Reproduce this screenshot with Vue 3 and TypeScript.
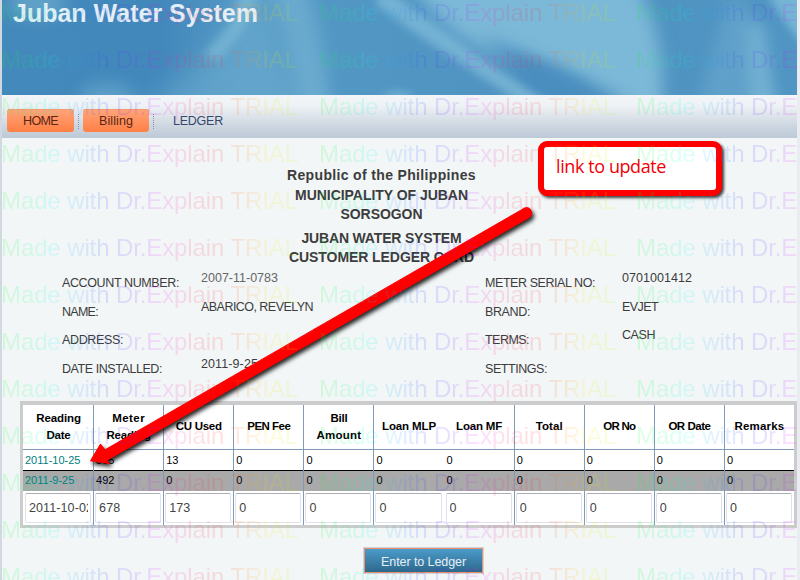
<script setup lang="ts">
interface Label { text: string; w: number }
interface Row { label: Label; value: Label; muted?: boolean }

const marks = Array.from({ length: 13 }, (_, r) =>
  [2, 320, 637].map((x) => ({ x: x - 1, y: 21 + r * 47 })),
).flat()

// Spreads letters so that a text run takes the given width.
const vFit = {
  mounted(el: HTMLElement, binding: { value: number }) {
    const natural = el.getBoundingClientRect().width
    const count = (el.textContent ?? '').trim().length
    if (count > 1) el.style.letterSpacing = `${(binding.value - natural) / count}px`
  },
}

const headings: Label[] = [
  { text: 'Republic of the Philippines', w: 189 },
  { text: 'MUNICIPALITY OF JUBAN', w: 173 },
  { text: 'SORSOGON', w: 82 },
  { text: 'JUBAN WATER SYSTEM', w: 160 },
  { text: 'CUSTOMER LEDGER CARD', w: 185 },
]
const left: Row[] = [
  { label: { text: 'ACCOUNT NUMBER:', w: 117 }, value: { text: '2007-11-0783', w: 77 }, muted: true },
  { label: { text: 'NAME:', w: 36 }, value: { text: 'ABARICO, REVELYN', w: 112 } },
  { label: { text: 'ADDRESS:', w: 61 }, value: { text: '', w: 0 } },
  { label: { text: 'DATE INSTALLED:', w: 100 }, value: { text: '2011-9-25', w: 57 } },
]
const right: Row[] = [
  { label: { text: 'METER SERIAL NO:', w: 110 }, value: { text: '0701001412', w: 70 } },
  { label: { text: 'BRAND:', w: 45 }, value: { text: 'EVJET', w: 36 } },
  { label: { text: 'TERMS:', w: 44 }, value: { text: 'CASH', w: 33 } },
  { label: { text: 'SETTINGS:', w: 62 }, value: { text: '', w: 0 } },
]
const columns: Label[][] = [
  [{ text: 'Reading', w: 44.5 }, { text: 'Date', w: 24 }],
  [{ text: 'Meter', w: 33 }, { text: 'Reading', w: 44.5 }],
  [{ text: 'CU Used', w: 46 }],
  [{ text: 'PEN Fee', w: 43 }],
  [{ text: 'Bill', w: 17 }, { text: 'Amount', w: 45 }],
  [{ text: 'Loan MLP', w: 54 }],
  [{ text: 'Loan MF', w: 46 }],
  [{ text: 'Total', w: 27 }],
  [{ text: 'OR No', w: 32 }],
  [{ text: 'OR Date', w: 42 }],
  [{ text: 'Remarks', w: 50 }],
]
const zeros = (n: number) => Array.from({ length: n }, () => '0')
const first = ['2011-10-25', '505', '13', ...zeros(8)]
const second = ['2011-9-25', '492', ...zeros(9)]
const entry = ['2011-10-02', '678', '173', ...zeros(8)]
</script>

<template>
  <div class="page">
    <header class="banner">
      <svg class="art" viewBox="0 0 795 95" preserveAspectRatio="none">
        <defs>
          <linearGradient id="base" x1="0" x2="1">
            <stop offset="0" stop-color="#4489bb" /><stop offset=".2" stop-color="#4288bb" />
            <stop offset=".3" stop-color="#5499c5" /><stop offset=".45" stop-color="#5297c4" />
            <stop offset=".7" stop-color="#4f92c1" /><stop offset="1" stop-color="#5095c3" />
          </linearGradient>
          <filter id="b6" filterUnits="userSpaceOnUse" x="-60" y="-80" width="920" height="260"><feGaussianBlur stdDeviation="8" /></filter>
          <filter id="b3" filterUnits="userSpaceOnUse" x="-60" y="-80" width="920" height="260"><feGaussianBlur stdDeviation="4.5" /></filter>
          <filter id="b14" filterUnits="userSpaceOnUse" x="-60" y="-80" width="920" height="260"><feGaussianBlur stdDeviation="14" /></filter>
        </defs>
        <rect width="795" height="95" fill="url(#base)" />
        <ellipse cx="35" cy="4" rx="30" ry="14" fill="#7bb8d6" opacity=".55" filter="url(#b6)" />
        <ellipse cx="105" cy="97" rx="28" ry="14" fill="#77b5d5" opacity=".5" filter="url(#b6)" />
        <path d="M240 0L225 40L190 70L130 120H320L290 60L270 20L290 -20Z" fill="#6caccf" opacity=".6" filter="url(#b14)" />
        <path d="M240 -15L228 25L200 56L218 60L240 32L262 -15Z" fill="#83bfd9" opacity=".6" filter="url(#b3)" />
        <path d="M272 -15C280 30 290 60 306 120H330C324 60 316 25 304 -15Z" fill="#79b6d5" opacity=".6" filter="url(#b6)" />
        <path d="M405 -30H628C655 20 666 60 658 125H652C600 80 560 68 510 60C460 45 435 20 405 -20Z" fill="#7cb8d7" filter="url(#b6)" />
        <path d="M478 36C510 50 560 60 615 115H540C520 75 500 55 478 36Z" fill="#488dbf" filter="url(#b6)" />
        <path d="M375 -18C430 22 480 60 560 112H532C480 76 420 40 375 5Z" fill="#80bcd9" opacity=".75" filter="url(#b3)" />
        <path d="M726 0L742 0L775 125H690Z" fill="#6aa9cf" opacity=".6" filter="url(#b6)" />
        <path d="M744 20L762 25L775 120H752Z" fill="#7ebad8" opacity=".75" filter="url(#b6)" />
        <path d="M760 -20H820V60Q780 30 760 -20Z" fill="#79b8d7" opacity=".9" filter="url(#b3)" />
        <ellipse cx="396" cy="97" rx="14" ry="6" fill="#7bb8d6" opacity=".7" filter="url(#b3)" />
      </svg>
      <h1><span v-fit="245">Juban Water System</span></h1>
    </header>

    <nav class="menu">
      <a class="tab home"><span v-fit="35">HOME</span></a>
      <i class="dots"></i>
      <a class="tab"><span v-fit="34">Billing</span></a>
      <i class="dots"></i>
      <a class="plain"><span v-fit="50">LEDGER</span></a>
    </nav>

    <main>
      <div class="heads">
        <p v-for="h in headings" :key="h.text"><span v-fit="h.w">{{ h.text }}</span></p>
      </div>

      <div class="info">
        <dl v-for="(group, g) in [left, right]" :key="g" :class="{ second: g === 1 }">
          <div v-for="r in group" :key="r.label.text" class="pair">
            <dt><span v-fit="r.label.w">{{ r.label.text }}</span></dt>
            <dd :class="{ muted: r.muted }"><span v-fit="r.value.w">{{ r.value.text }}</span></dd>
          </div>
        </dl>
      </div>

      <div class="ledger">
        <div class="row head">
          <div v-for="(c, i) in columns" :key="i" class="cell">
            <b v-for="l in c" :key="l.text"><span v-fit="l.w">{{ l.text }}</span></b>
          </div>
        </div>
        <div class="row data">
          <div v-for="(v, i) in first" :key="i" class="cell"><span>{{ v }}</span></div>
        </div>
        <div class="row data alt">
          <div v-for="(v, i) in second" :key="i" class="cell"><span>{{ v }}</span></div>
        </div>
        <div class="row entry">
          <div v-for="(v, i) in entry" :key="i" class="cell"><div class="field"><div class="value">{{ v }}</div></div></div>
        </div>
      </div>

      <button class="submit"><span v-fit="85">Enter to Ledger</span></button>
    </main>

    <svg class="arrow" width="800" height="580" viewBox="0 0 800 580">
      <path d="M525 207.8L105 449.8L100.5 444L90.5 460.8L109.5 463.5L107 460.2L530 217A5.4 5.4 0 0 0 525 207.8Z" fill="#f00" stroke="#f00" stroke-linejoin="round" />
    </svg>
    <div class="note"><span v-fit="110">link to update</span></div>

    <svg class="watermark" width="800" height="580" viewBox="0 0 800 580">
      <defs>
        <linearGradient id="rainbow" x1="0" x2="1">
          <stop offset="0" stop-color="#00ff20" /><stop offset=".1" stop-color="#00ff80" />
          <stop offset=".17" stop-color="#00ffe8" /><stop offset=".26" stop-color="#20a0ff" />
          <stop offset=".36" stop-color="#3030ff" /><stop offset=".45" stop-color="#7020ff" />
          <stop offset=".53" stop-color="#f010ff" /><stop offset=".64" stop-color="#ff2060" />
          <stop offset=".74" stop-color="#ff2020" /><stop offset=".83" stop-color="#ff9010" />
          <stop offset=".9" stop-color="#ffe800" /><stop offset="1" stop-color="#a8ff00" />
        </linearGradient>
      </defs>
      <text v-for="(m, i) in marks" :key="i" :x="m.x" :y="m.y" textLength="297" fill="url(#rainbow)">Made with Dr.Explain TRIAL</text>
    </svg>
  </div>
</template>

<style>
body { background: #f2f6f8; overflow: hidden; }
</style>

<style scoped>
.page {
  position: relative; box-sizing: border-box; width: 800px; height: 580px; overflow: hidden;
  border-left: 2px solid #d2d8e0; border-right: 3px solid #e9edf1; background: #f2f6f7;
  font: 12.5px/16px "Liberation Sans", Arial, sans-serif; color: #3c3c3c; white-space: nowrap;
}
span { display: inline-block; }
.banner { height: 95px; position: relative; overflow: hidden; }
.art { position: absolute; inset: 0; width: 795px; height: 95px; }
h1 { position: relative; margin: 0; padding-left: 11px; font-size: 25px; line-height: 26px; color: #e3eef6; }
.menu {
  box-sizing: border-box; height: 43px; padding: 14px 0 0 5px; display: flex; align-items: flex-start;
  background: linear-gradient(#f3f6f8, #eef2f5 25%, #d2dae3 65%, #bcc9d7);
}
.tab {
  box-sizing: border-box; width: 66px; height: 23px; border-radius: 3px; text-align: center; line-height: 24px;
  background: linear-gradient(#ffa57a, #ff8045); box-shadow: inset 0 1px #f39a74; color: #5d2412;
}
.home { width: 67px; }
.dots { height: 15px; margin: 5px 4px 0; border-left: 1px dotted #8093a8; }
.plain { margin-left: 15px; line-height: 24px; color: #37496a; }
.heads { padding-top: 27px; width: 759px; text-align: center; font-size: 14px; font-weight: bold; }
.heads p { margin: 0 0 3px; height: 17px; line-height: 20px; }
.heads p:nth-child(2) { margin-bottom: 2px; }
.heads p:nth-child(3) { margin-bottom: 7px; }
.heads p:nth-child(4) { margin-bottom: 2px; }
.info { display: flex; padding: 3px 0 0 60px; height: 134px; box-sizing: border-box; }
dl { margin: 0; width: 423px; flex: none; display: flex; flex-direction: column; gap: 12.7px; }
.second { width: 300px; }
.pair { display: flex; height: 16px; }
dt { width: 139px; padding-top: 5px; }
.second dt { width: 137px; }
dd { margin: 0; }
.muted { color: #666; }
.ledger { margin-left: 18px; box-sizing: border-box; width: 777px; height: 127px; border: 3px solid #ccc; border-top-width: 4px; background: #fff; color: #000; }
.row { display: grid; grid-template-columns: repeat(10, 70.1px) 1fr; }
.cell { box-sizing: border-box; border-left: 1px solid #7f9bb8; min-width: 0; }
.cell:first-child, .cell:nth-child(7) { border-left-color: transparent; }
.head { height: 45px; box-sizing: border-box; border-bottom: 1px solid #7f9bb8; }
.head .cell { display: flex; flex-direction: column; align-items: center; justify-content: center; font-size: 11.5px; line-height: 17px; padding-bottom: 1px; }
.data { height: 20px; font-size: 11px; line-height: 21px; }
.data .cell { padding-left: 2px; }
.data .cell:first-child { padding-left: 1px; color: #008080; }
.alt { height: 21px; box-sizing: border-box; border-top: 1px solid #000; background: #a9a9a9; line-height: 19px; }
.entry { height: 34px; }
.entry .cell { padding: 2px 1px; }
.field { box-sizing: border-box; height: 30px; border: 1px solid #dfe1ec; border-top-color: #aaadb2; border-radius: 2px; line-height: 28px; margin-right: 1px; padding: 0 2px 0 3px; color: #444; }
.value { overflow: hidden; letter-spacing: .1px; }
.submit {
  display: block; box-sizing: border-box; width: 119px; height: 25px; margin: 20px 0 0 362px; padding: 3px 0 0;
  border: 1px solid #ef8f67; outline: 1px solid #ccd3da; background: linear-gradient(#4b9bc9, #2d688d);
  font: 12.5px/19px "Liberation Sans", Arial, sans-serif; color: #e6eff6;
}
.arrow { position: absolute; left: -2px; top: 0; filter: drop-shadow(2px 3px 2px rgba(0, 0, 0, .85)); }
.note {
  position: absolute; left: 536px; top: 141px; box-sizing: border-box; width: 184px; height: 55px; padding: 9px 0 0 12px;
  border: 6px solid #f00; border-radius: 9px; background: #fff; box-shadow: 2px 2px 3px rgba(0, 0, 0, .75);
  font: 18px/21px "Open Sans", "Noto Sans", sans-serif; color: #f00008;
}
.watermark { position: absolute; left: -2px; top: 0; font: 24px "Liberation Sans", Arial, sans-serif; opacity: .13; pointer-events: none; }
</style>
